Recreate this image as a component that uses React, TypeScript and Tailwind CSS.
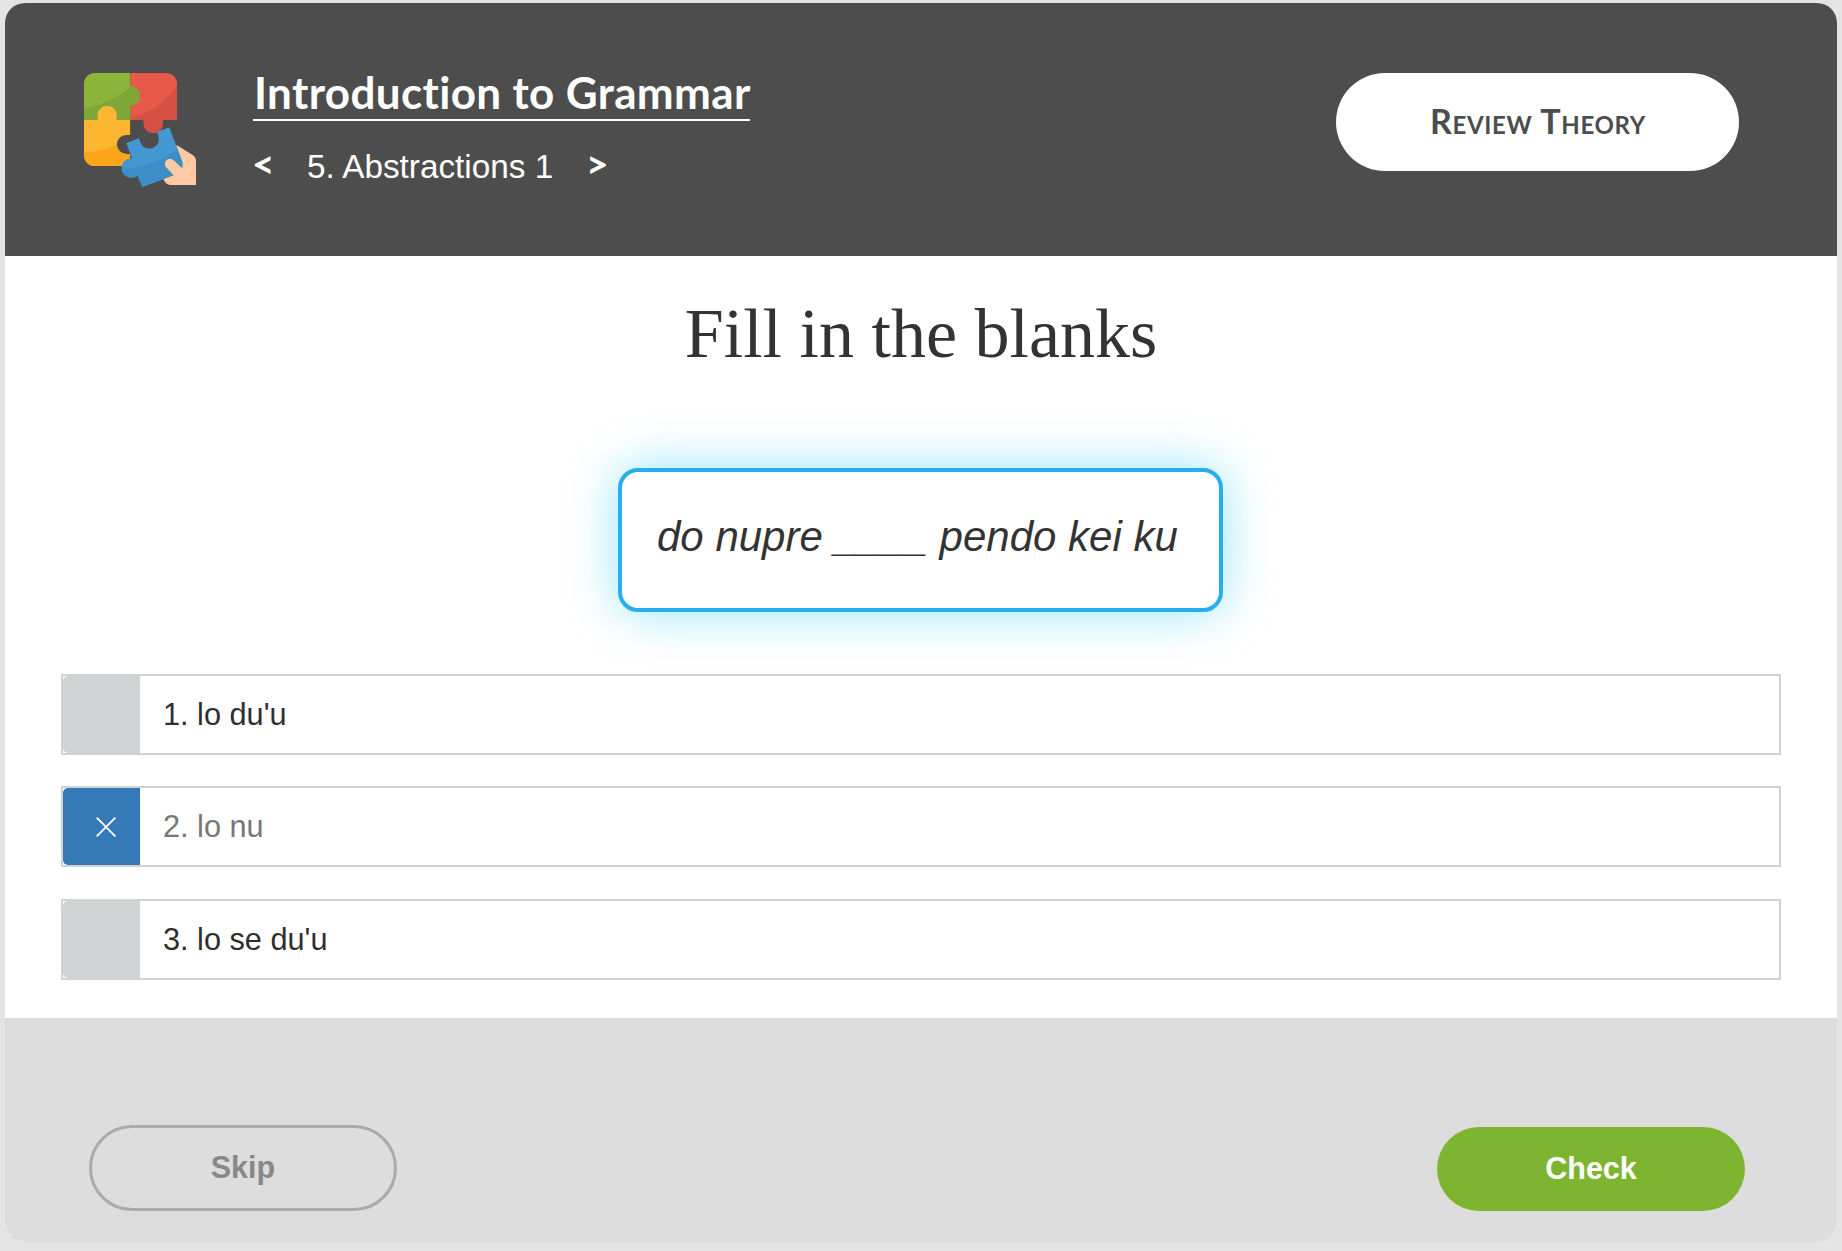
import React from 'react';

const SANS = "font-['Liberation_Sans',Arial,sans-serif]";

function PuzzleLogo() {
  return (
    <svg viewBox="42 39 336 342" className="mt-[70px] h-[114px] w-[112px] shrink-0" aria-hidden="true">
      <defs>
        <clipPath id="green"><path d="M74 39H181V79A29 29 0 1 1 181 137V180H42V71A32 32 0 0 1 74 39Z" /></clipPath>
        <clipPath id="red"><path d="M181 39H289A32 32 0 0 1 321 71V180H279V190A29 29 0 0 1 221 190V180H181Z" /></clipPath>
        <clipPath id="yellow"><path d="M42 180H83V166A28 28 0 0 1 140 166V180H181V225H169A28 28 0 0 0 169 282H181V318H74A32 32 0 0 1 42 286Z" /></clipPath>
        <clipPath id="blue"><path d="M169 249L207 235C211 251 219 266 238 266C257 266 269 249 266 231C264 223 261 218 260 216L298 202L338 308L338 335L217 381L203 347C187 357 168 354 159 340C149 322 157 299 177 297L186 296Z" /></clipPath>
      </defs>
      <g clipPath="url(#red)">
        <rect x="170" y="30" width="160" height="200" fill="#e8594a" />
        <path d="M181 174C240 160 291 126 325 68V225H181Z" fill="#d55144" />
      </g>
      <g clipPath="url(#green)">
        <rect x="40" y="30" width="190" height="155" fill="#8bb53a" />
        <path d="M42 146C98 135 146 114 190 72H230V185H42Z" fill="#80a735" />
      </g>
      <g clipPath="url(#yellow)">
        <rect x="40" y="130" width="150" height="195" fill="#fdb632" />
        <path d="M42 276C80 275 113 267 146 251L190 225V320H42Z" fill="#fea61b" />
      </g>
      <path d="M320 255L369 286Q378 292 378 303V375H300Q286 373 280 357L308 340Z" fill="#fec9a3" />
      <g clipPath="url(#blue)">
        <rect x="150" y="195" width="195" height="190" fill="#4398d2" />
        <path d="M160 325C225 324 280 302 323 265L345 300V385H160Z" fill="#3d8dc9" />
      </g>
      <path d="M310 345L288 322C280 310 288 296 300 296C306 296 310 299 314 303L336 325C341 318 338 307 338 307L355 340L335 370L300 372Z" fill="#fec9a3" />
    </svg>
  );
}

function Header() {
  return (
    <header className="flex h-[253px] items-start bg-[#4d4d4d] pr-[98px] pl-[79px] text-white">
      <PuzzleLogo />
      <div className="mt-[65px] ml-[57px]">
        <h1 className="w-[497px] border-b-2 border-white pt-px pb-1 pl-px font-['Lato',sans-serif] text-[44px] leading-[46px] font-bold tracking-[0.35px] whitespace-nowrap [font-variant-ligatures:none]">
          Introduction to Grammar
        </h1>
        <nav className={`mt-[26px] flex h-10 items-center text-[33.3px] leading-10 whitespace-nowrap ${SANS}`}>
          <a className="-ml-px w-[55px] pb-2 font-['Lato',sans-serif] text-[39px] font-bold">&lt;</a>
          <span className="w-[279px]">5. Abstractions 1</span>
          <a className="pb-2 font-['Lato',sans-serif] text-[39px] font-bold">&gt;</a>
        </nav>
      </div>
      <button className="mt-[70px] ml-auto h-[98px] w-[403px] rounded-full bg-white pb-1 pl-px font-['Lato',sans-serif] text-[34px] font-bold tracking-[0.65px] text-[#4d4d4d] [font-variant-caps:small-caps]">
        Review Theory
      </button>
    </header>
  );
}

function Choice({ label, selected = false }: { label: string; selected?: boolean }) {
  return (
    <li className={`flex h-[81px] border-2 border-[#d1d2d4] ${SANS}`}>
      <span
        className={`flex w-[77px] items-center justify-center rounded-l-[5px] pl-[9px] ${selected ? 'bg-[#357ab7]' : 'bg-[#d1d2d4]'}`}
      >
        {selected && (
          <svg viewBox="0 0 20 20" className="size-5" stroke="white" strokeWidth="1.8" aria-hidden="true">
            <path d="M.7 .7L19.3 19.3M19.3 .7L.7 19.3" />
          </svg>
        )}
      </span>
      <span className={`pl-[23px] text-[30.7px] leading-[77px] ${selected ? 'text-[#777]' : 'text-[#2f2f2f]'}`}>{label}</span>
    </li>
  );
}

export default function App() {
  return (
    <div className="h-[1251px] w-[1842px] overflow-hidden bg-[#e4e4e4] px-[5px] pt-[3px]">
      <main className="flex h-[1239px] flex-col overflow-hidden rounded-[20px] bg-white">
        <Header />
        <section className="flex h-[762px] flex-col px-14">
          <h2 className="mt-[38px] text-center font-['Liberation_Serif','Times_New_Roman',serif] text-[70px] leading-[80px] text-[#333]">
            Fill in the blanks
          </h2>
          <p
            className={`mt-[94px] ml-[557px] h-36 w-[605px] rounded-[20px] border-4 border-[#27aeef] pt-[35px] pl-[35px] text-[42px] leading-[60px] whitespace-nowrap text-[#333] italic shadow-[0_0_50px_rgba(0,195,245,0.42)] ${SANS}`}
          >
            do nupre ____ pendo kei ku
          </p>
          <ul className="mt-[62px] flex flex-col">
            <Choice label="1. lo du'u" />
            <li className="h-[31px]" />
            <Choice label="2. lo nu" selected />
            <li className="h-8" />
            <Choice label="3. lo se du'u" />
          </ul>
        </section>
        <footer className={`flex h-[224px] items-start justify-between bg-[#ddd] pr-[92px] pl-[84px] text-[30.5px] font-bold ${SANS}`}>
          <button className="mt-[107px] h-[86px] w-[308px] rounded-full border-3 border-[#aaa] text-[#888]">Skip</button>
          <button className="mt-[109px] h-[84px] w-[308px] rounded-full bg-[#7eb530] text-white">Check</button>
        </footer>
      </main>
    </div>
  );
}
